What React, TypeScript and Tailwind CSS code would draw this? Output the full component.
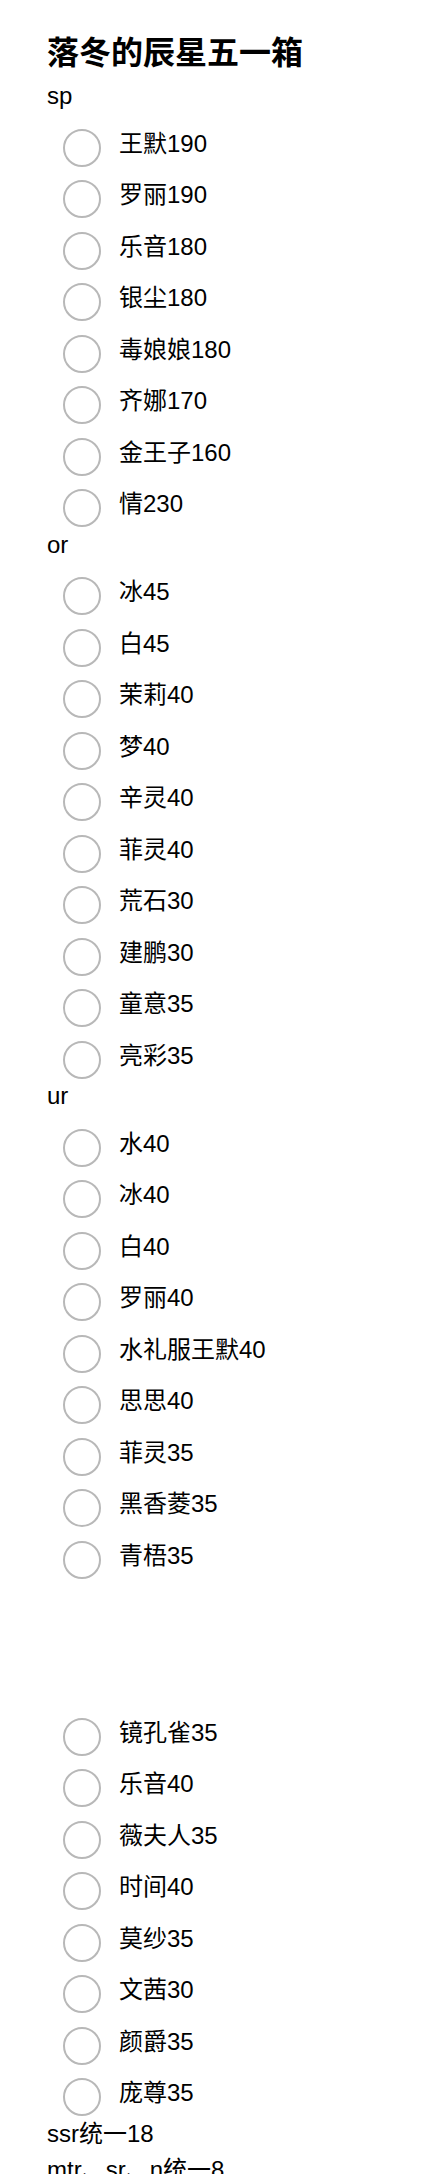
import React from 'react';

type Group = { label?: string; items: string[]; spacer?: boolean };

const groups: Group[] = [
  {
    label: 'sp',
    items: ['王默190', '罗丽190', '乐音180', '银尘180', '毒娘娘180', '齐娜170', '金王子160', '情230'],
  },
  {
    label: 'or',
    items: ['冰45', '白45', '茉莉40', '梦40', '辛灵40', '菲灵40', '荒石30', '建鹏30', '童意35', '亮彩35'],
  },
  {
    label: 'ur',
    items: ['水40', '冰40', '白40', '罗丽40', '水礼服王默40', '思思40', '菲灵35', '黑香菱35', '青梧35'],
  },
  {
    spacer: true,
    items: ['镜孔雀35', '乐音40', '薇夫人35', '时间40', '莫纱35', '文茜30', '颜爵35', '庞尊35'],
  },
];

function Option({ text }: { text: string }) {
  return (
    <label className="flex items-start h-[51.5px] pl-[16px]">
      <input
        type="radio"
        name="box"
        className="appearance-none mt-[14px] w-[38px] h-[38px] shrink-0 rounded-full border-2 border-[#b8b8b8] bg-white"
      />
      <span className="ml-[18px] pt-[11px] leading-[36px]">{text}</span>
    </label>
  );
}

function App() {
  return (
    <div className="min-h-screen bg-white text-black text-[24px] font-['Liberation_Sans','Noto_Sans_CJK_SC',sans-serif] px-[47px] pt-[33px]">
      <h1 className="text-[32px] font-bold leading-[40px] h-[40px] mb-[5px]">落冬的辰星五一箱</h1>

      {groups.map((g, i) => (
        <div key={i}>
          {g.label && <div className="h-[36.5px] leading-[36.5px]">{g.label}</div>}
          {g.spacer && <div className="h-[125.5px]" />}
          {g.items.map((t) => (
            <Option key={t} text={t} />
          ))}
        </div>
      ))}

      <div className="h-[36.5px] leading-[36.5px]">ssr统一18</div>
      <div className="h-[36.5px] leading-[36.5px]">mtr、sr、n统一8</div>
    </div>
  );
}

export default App;
